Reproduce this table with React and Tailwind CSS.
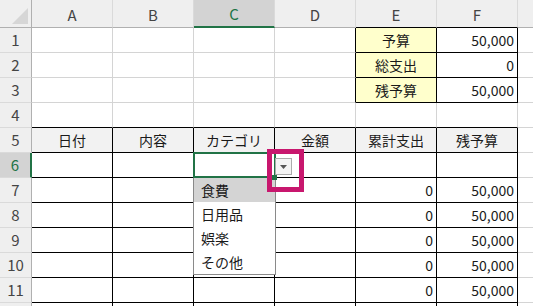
import React from "react";

// columns and the rows we can see in the window
const COLS = ["A", "B", "C", "D", "E", "F"];
const ROWS = [1, 2, 3, 4, 5, 6, 7, 8, 9, 10, 11, 12];

const DATA = {
  1: { E: "予算", F: "50,000" },
  2: { E: "総支出", F: "0" },
  3: { E: "残予算", F: "50,000" },
  5: { A: "日付", B: "内容", C: "カテゴリ", D: "金額", E: "累計支出", F: "残予算" },
  7: { E: "0", F: "50,000" },
  8: { E: "0", F: "50,000" },
  9: { E: "0", F: "50,000" },
  10: { E: "0", F: "50,000" },
  11: { E: "0", F: "50,000" },
};

const OPTIONS = ["食費", "日用品", "娯楽", "その他"];

function Cell({ row, col }) {
  const text = DATA[row]?.[col] ?? "";
  const summary = row <= 3 && (col === "E" || col === "F");
  const table = row >= 5;
  const rightBlack = table || (row <= 3 && (col === "D" || col === "E" || col === "F"));
  const bottomBlack = row >= 4 || summary;
  const centered = row === 5 || (row <= 3 && col === "E");

  return (
    <div
      className={`flex h-[25px] w-[81px] shrink-0 items-center border-r border-b px-[3px] text-[14px] text-[#1a1a1a] ${
        rightBlack ? "border-r-black" : "border-r-[#d4d4d4]"
      } ${bottomBlack ? "border-b-black" : "border-b-[#d4d4d4]"} ${
        row <= 3 && col === "E" ? "bg-[#ffffcc]" : row === 5 ? "bg-[#f2f2f2]" : "bg-white"
      } ${centered ? "justify-center" : "justify-end"}`}
    >
      {text}
    </div>
  );
}

function ColHeader({ col }) {
  const sel = col === "C";
  const black = col === "E" || col === "F";
  return (
    <div
      className={`flex h-[28px] w-[81px] shrink-0 items-center justify-center border-r border-r-[#dadada] pt-[3px] text-[15px] ${
        sel
          ? "border-b-2 border-b-[#217346] bg-[#d3d3d3] text-[#217346]"
          : black
          ? "border-b border-b-black bg-[#efefef] text-[#444]"
          : "border-b border-b-[#b0b0b0] bg-[#efefef] text-[#444]"
      }`}
    >
      {col}
    </div>
  );
}

function RowHeader({ row }) {
  const sel = row === 6;
  return (
    <div
      className={`flex h-[25px] w-[32px] shrink-0 items-center justify-center border-b border-b-[#dadada] text-[15px] ${
        sel
          ? "border-r-2 border-r-[#217346] bg-[#d3d3d3] text-[#217346]"
          : "border-r border-r-[#b0b0b0] bg-[#efefef] text-[#444]"
      }`}
    >
      {/* row 12 only peeks in at the bottom edge, its number is out of view */}
      {row < 12 ? row : ""}
    </div>
  );
}

export default function App() {
  return (
    <div
      className="relative h-[306px] w-[533px] overflow-hidden bg-white"
      style={{ fontFamily: '"Noto Sans CJK JP", "Noto Sans", sans-serif' }}
    >
      {/* column header */}
      <div className="flex">
        <div className="relative h-[28px] w-[32px] shrink-0 border-r border-b border-r-[#b0b0b0] border-b-[#b0b0b0] bg-[#efefef]">
          <svg className="absolute left-[12px] top-[8px]" width="16" height="16" viewBox="0 0 16 16">
            <polygon points="16,0 16,16 0,16" fill="#d6d6d6" />
          </svg>
        </div>
        {COLS.map((c) => (
          <ColHeader key={c} col={c} />
        ))}
        <div className="h-[28px] flex-1 border-b border-b-[#b0b0b0] bg-[#efefef]" />
      </div>

      {/* grid rows */}
      {ROWS.map((r) => (
        <div key={r} className="flex">
          <RowHeader row={r} />
          {COLS.map((c) => (
            <Cell key={c} row={r} col={c} />
          ))}
          <div className="h-[25px] flex-1 border-b border-b-[#d4d4d4]" />
        </div>
      ))}

      {/* dropdown list under C6 */}
      <div className="absolute left-[193px] top-[177px] w-[83px] border border-[#8a8a8a] bg-white">
        {OPTIONS.map((o, i) => (
          <div
            key={o}
            className={`flex h-[24px] items-center px-[7px] text-[14px] text-[#1a1a1a] ${
              i === 0 ? "bg-[#d4d4d4]" : ""
            }`}
          >
            {o}
          </div>
        ))}
      </div>

      {/* active cell C6 */}
      <div className="absolute left-[193px] top-[152px] h-[26px] w-[83px] border-2 border-[#217346]" />
      <div className="absolute left-[272px] top-[175px] h-[5px] w-[5px] bg-[#217346]" />

      {/* dropdown button */}
      <div className="absolute left-[275px] top-[158px] flex h-[17px] w-[17px] items-center justify-center border border-[#ababab] bg-[#f4f4f4]">
        <svg width="7" height="4" viewBox="0 0 7 4">
          <polygon points="0,0 7,0 3.5,4" fill="#555" />
        </svg>
      </div>

      {/* highlight box */}
      <div className="absolute left-[267px] top-[149px] h-[43px] w-[37px] border-[5px] border-[#c8176e]" />
    </div>
  );
}
